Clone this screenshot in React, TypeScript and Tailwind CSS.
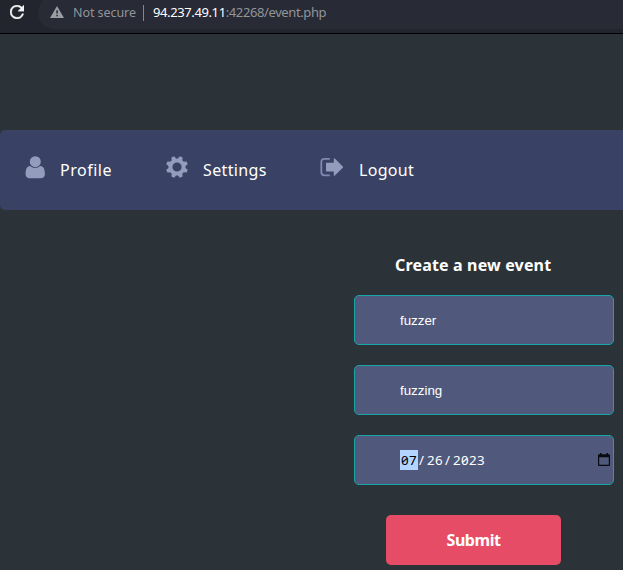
import type { ReactNode } from 'react';

function ReloadIcon() {
  return (
    <svg viewBox="4 4 16 16" className="ml-[10px] mt-[5px] h-[14px] w-[14px] shrink-0" fill="#f1f3f4" stroke="#f1f3f4" strokeWidth="0.4">
      <path d="M17.65 6.35A7.96 7.96 0 0 0 12 4a8 8 0 1 0 7.73 10h-2.08A6 6 0 1 1 12 6c1.66 0 3.14.69 4.22 1.78L13 11h7V4z" />
    </svg>
  );
}

function UserIcon() {
  return (
    <svg viewBox="0 0 20 23" className="h-[23px] w-5" fill="#949cbe">
      <circle cx="10.3" cy="5.7" r="5.5" />
      <path d="M5.2 10C1.5 10 .6 14 .6 18.3c0 2.3 1.3 3.9 3.4 3.9h12.4c2.2 0 3.5-1.6 3.5-3.9 0-4.3-1-8.3-4.8-8.3a7.2 7.2 0 0 1-9.9 0z" />
    </svg>
  );
}

function GearIcon() {
  return (
    <svg viewBox="0 0 22 22" className="h-[22px] w-[22px]" fill="none">
      <circle cx="11" cy="11" r="6.6" stroke="#949cbe" strokeWidth="4" />
      <g fill="#949cbe">
        {[22.5, 67.5, 112.5, 157.5, 202.5, 247.5, 292.5, 337.5].map((angle) => (
          <path key={angle} d="M8.3 4 9.5 0h3l1.2 4z" transform={`rotate(${angle} 11 11)`} />
        ))}
      </g>
    </svg>
  );
}

function LogoutIcon() {
  return (
    <svg viewBox="0 0 23 20" className="h-5 w-[23px]">
      <path d="M9.8 1.9H4.6Q1.3 1.9 1.3 5.2v9.9q0 3.3 3.3 3.3h5.2" fill="none" stroke="#8189b0" strokeWidth="1.8" />
      <path d="M6.6 5.7h7.2V2q0-1.3 1-.4l8 7.9q.5.6 0 1.2l-8 7.9q-1 .8-1-.4v-3.8H6.6q-.6 0-.6-.6V6.3q0-.6.6-.6z" fill="#949cbe" />
    </svg>
  );
}

function CalendarIcon() {
  return (
    <svg viewBox="0 0 12 13" className="h-[13px] w-3" fill="#080a10">
      <path fillRule="evenodd" d="M2 0h1.5v1.2h5V0H10v1.2h1q1 0 1 1V12q0 1-1 1H1q-1 0-1-1V2.2q0-1 1-1h1zM1.2 4.2v7.6h9.6V4.2z" />
    </svg>
  );
}

function Field({ children, className = '' }: { children: ReactNode; className?: string }) {
  return (
    <div className={`flex h-[50px] items-center rounded-[5px] border border-[#18a5a7] bg-[#50597b] pl-[45px] text-[13.333px] text-white ${className}`}>
      {children}
    </div>
  );
}

export default function App() {
  return (
    <div className="h-[570px] w-[623px] overflow-hidden bg-[#2c3338] font-['Noto_Sans',sans-serif] text-white">
      <header className="flex h-[34px] items-start border-b border-black bg-[#202124]">
        <div className="flex h-[33px] w-full bg-[#22242e]">
          <ReloadIcon />
          <div className="-mt-1 ml-[14px] flex h-[33px] flex-1 items-center rounded-l-full bg-[#282a35] pl-[12px] text-[13px] leading-none">
            <svg viewBox="0 0 14 12" className="mb-[2px] h-3 w-[14px] shrink-0">
              <path d="M7 0 14 12H0z" fill="#9b9da3" />
              <path d="M6.3 4.2h1.5v3.4H6.3zm0 4.5h1.5v1.5H6.3z" fill="#282a35" />
            </svg>
            <span className="ml-[9px] mt-px w-[63px] whitespace-nowrap text-[12.5px] tracking-[-0.06px] text-[#91959a]">Not secure</span>
            <span className="ml-[7px] h-4 w-px bg-[#85888e]" />
            <span className="ml-[9px] whitespace-nowrap text-[13px] tracking-[-0.39px] text-[#91959a]">
              <span className="text-white">94.237.49.11</span>:42268/event.php
            </span>
          </div>
        </div>
      </header>

      <nav className="mt-24 flex h-20 rounded-l-[5px] bg-[#394264] text-[16px] leading-[20px]">
        <a className="flex h-20 w-[166px] pl-[25px]">
          <span className="mt-[26px] w-[35px]"><UserIcon /></span>
          <span className="mt-[30px] tracking-[0.5px]">Profile</span>
        </a>
        <a className="flex h-20 w-[154px]">
          <span className="mt-[26px] w-[37px]"><GearIcon /></span>
          <span className="mt-[30px] tracking-[0.35px]">Settings</span>
        </a>
        <a className="flex h-20">
          <span className="mt-[27px] w-[39px]"><LogoutIcon /></span>
          <span className="mt-[30px] tracking-[0.3px]">Logout</span>
        </a>
      </nav>

      <main className="ml-[354px] w-[260px] pt-[45px]">
        <h1 className="ml-[41px] whitespace-nowrap text-[16px] font-bold leading-5 tracking-[0.16px]">Create a new event</h1>
        <form className="mt-5 flex flex-col gap-5">
          <Field className="pt-[2px] font-['Liberation_Sans',sans-serif]">fuzzer</Field>
          <Field className="pt-[2px] font-['Liberation_Sans',sans-serif]">fuzzing</Field>
          <Field className="pr-[3px] font-['Noto_Sans',sans-serif] tracking-[0.37px] [font-feature-settings:'zero']">
            <span className="flex h-5 w-[18px] items-center bg-[#b3d4ff] pl-px pt-[2px] text-black">07</span>
            <span className="w-[9px] pl-[1px] pt-[2px]">/</span>
            <span className="w-4 pt-[2px]">26</span>
            <span className="w-[10px] pl-[2px] pt-[2px]">/</span>
            <span className="pt-[2px]">2023</span>
            <span className="mb-[2px] ml-auto"><CalendarIcon /></span>
          </Field>
          <button type="button" className="ml-8 mt-[10px] h-[50px] w-[175px] rounded-[5px] bg-[#e64c65] text-[16px] font-bold tracking-[-0.45px]">Submit</button>
        </form>
      </main>
    </div>
  );
}
